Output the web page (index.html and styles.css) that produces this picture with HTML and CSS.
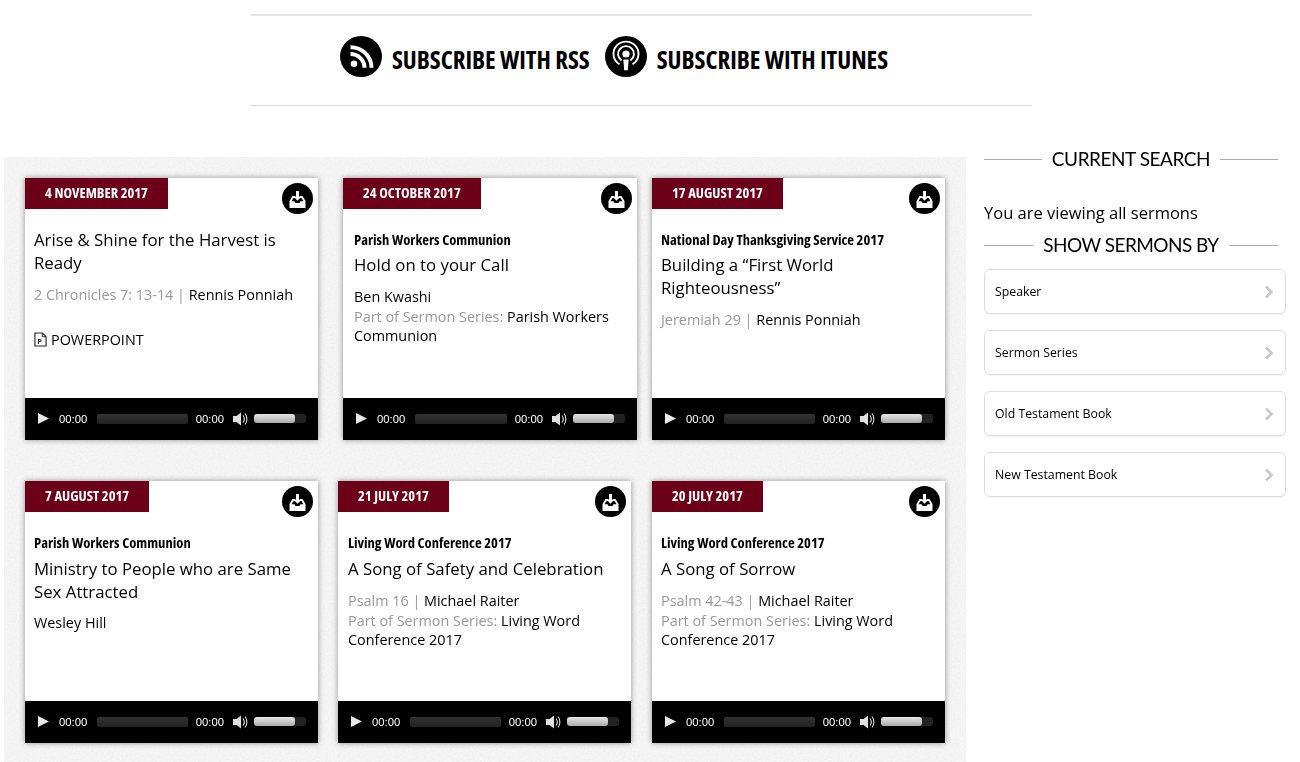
FILE: index.html
```html
<!DOCTYPE html>
<html lang="en">
<head>
<meta charset="utf-8">
<title>Sermons</title>
<link rel="stylesheet" href="styles.css">
</head>
<body>
<svg class="defs" width="0" height="0" aria-hidden="true">
  <filter id="grain" x="0" y="0" width="100%" height="100%">
    <feTurbulence type="fractalNoise" baseFrequency="0.5" numOctaves="2" seed="4"/>
    <feColorMatrix type="matrix" values="0 0 0 0 .5  0 0 0 0 .5  0 0 0 0 .5  .16 .16 0 0 -.12"/>
  </filter>
  <symbol id="dl" viewBox="0 0 31 31">
    <circle cx="15.5" cy="15.5" r="15.5" fill="#000"/>
    <path d="M7.500 25v-7l3-5h2.500v2h-1.500l-2 3.200h3l1 1.800h4l1-1.800h3l-2-3.200H18v-2h2.500l3 5v7z" fill="#fff"/>
    <path d="M14 8h3v5.500h2.400l-3.900 4.200-3.900-4.200H14z" fill="#fff"/>
  </symbol>
  <symbol id="play" viewBox="0 0 12 12"><path d="M0 0l12 6-12 6z" fill="#e8e8e8"/></symbol>
  <symbol id="vol" viewBox="0 0 15 14">
    <path d="M0 4h3.500L8 .5v13L3.500 10H0z" fill="#e0e0e0"/>
    <path d="M10 3.500c1.500 2 1.500 5 0 7M12 1.500c2.500 3 2.500 8 0 11" fill="none" stroke="#e0e0e0" stroke-width="1.100"/>
  </symbol>
  <symbol id="chev" viewBox="0 0 10 14"><path d="M2 1.500L7.500 7 2 12.500" fill="none" stroke="#c8c8c8" stroke-width="2.600"/></symbol>
</svg>

<header class="subscribe">
  <a class="sub-link">
    <svg class="sub-icon" viewBox="0 0 42 42" preserveAspectRatio="none"><circle cx="21" cy="21" r="21" fill="#000"/><circle cx="14" cy="28.500" r="3.300" fill="#fff"/><path d="M10.500 18.500a14 14 0 0 1 14 14M10.500 11.500a21 21 0 0 1 21 21" fill="none" stroke="#fff" stroke-width="4"/></svg>
    <span>SUBSCRIBE WITH RSS</span>
  </a>
  <a class="sub-link">
    <svg class="sub-icon" viewBox="0 0 42 42" preserveAspectRatio="none"><circle cx="21" cy="21" r="21" fill="#000"/><circle cx="21" cy="18.500" r="3.600" fill="#fff"/><path d="M18.300 24h5.400l-.9 11h-3.600z" fill="#fff"/><path d="M16.500 25a8 8 0 1 1 9 0M14.500 29a12.500 12.500 0 1 1 13 0" fill="none" stroke="#fff" stroke-width="1.900"/></svg>
    <span>SUBSCRIBE WITH ITUNES</span>
  </a>
</header>

<div class="layout">
  <main class="panel">
    <svg class="grain" aria-hidden="true"><rect width="100%" height="100%" filter="url(#grain)"/></svg>
    <div class="row row-a">
      <article class="card w293">
        <div class="card-top"><div class="date">4 NOVEMBER 2017</div><svg class="dl"><use href="#dl"/></svg></div>
        <div class="body">
          <h2 class="title plain">Arise &amp; Shine for the Harvest is Ready</h2>
          <p class="meta"><span class="g">2 Chronicles 7: 13-14 | </span>Rennis Ponniah</p>
          <p class="file"><svg class="ppt" viewBox="0 0 14 16"><path d="M1 1h8l4 4v10H1z" fill="none" stroke="#222" stroke-width="1.200"/><path d="M9 1v4h4" fill="none" stroke="#222"/><text x="3.600" y="13" class="ppt-t">P</text></svg>POWERPOINT</p>
        </div>
        <div class="player"><svg class="p-play"><use href="#play"/></svg><span>00:00</span><i class="track"></i><span>00:00</span><svg class="p-vol"><use href="#vol"/></svg><i class="volbar"><b></b></i></div>
      </article>
      <article class="card w294">
        <div class="card-top"><div class="date">24 OCTOBER 2017</div><svg class="dl"><use href="#dl"/></svg></div>
        <div class="body pad11">
          <h3 class="series">Parish Workers Communion</h3>
          <h2 class="title">Hold on to your Call</h2>
          <p class="meta">Ben Kwashi<br><span class="g">Part of Sermon Series: </span>Parish Workers Communion</p>
        </div>
        <div class="player"><svg class="p-play"><use href="#play"/></svg><span>00:00</span><i class="track"></i><span>00:00</span><svg class="p-vol"><use href="#vol"/></svg><i class="volbar"><b></b></i></div>
      </article>
      <article class="card w293">
        <div class="card-top"><div class="date">17 AUGUST 2017</div><svg class="dl"><use href="#dl"/></svg></div>
        <div class="body">
          <h3 class="series">National Day Thanksgiving Service 2017</h3>
          <h2 class="title">Building a “First World Righteousness”</h2>
          <p class="meta"><span class="g">Jeremiah 29 | </span>Rennis Ponniah</p>
        </div>
        <div class="player"><svg class="p-play"><use href="#play"/></svg><span>00:00</span><i class="track"></i><span>00:00</span><svg class="p-vol"><use href="#vol"/></svg><i class="volbar"><b></b></i></div>
      </article>
    </div>
    <div class="row row-b">
      <article class="card w293">
        <div class="card-top"><div class="date">7 AUGUST 2017</div><svg class="dl"><use href="#dl"/></svg></div>
        <div class="body">
          <h3 class="series">Parish Workers Communion</h3>
          <h2 class="title tight">Ministry to People who are Same Sex Attracted</h2>
          <p class="meta">Wesley Hill</p>
        </div>
        <div class="player"><svg class="p-play"><use href="#play"/></svg><span>00:00</span><i class="track"></i><span>00:00</span><svg class="p-vol"><use href="#vol"/></svg><i class="volbar"><b></b></i></div>
      </article>
      <article class="card w293">
        <div class="card-top"><div class="date">21 JULY 2017</div><svg class="dl"><use href="#dl"/></svg></div>
        <div class="body pad10">
          <h3 class="series">Living Word Conference 2017</h3>
          <h2 class="title">A Song of Safety and Celebration</h2>
          <p class="meta"><span class="g">Psalm 16 | </span>Michael Raiter<br><span class="g">Part of Sermon Series: </span>Living Word Conference 2017</p>
        </div>
        <div class="player"><svg class="p-play"><use href="#play"/></svg><span>00:00</span><i class="track"></i><span>00:00</span><svg class="p-vol"><use href="#vol"/></svg><i class="volbar"><b></b></i></div>
      </article>
      <article class="card w293">
        <div class="card-top"><div class="date">20 JULY 2017</div><svg class="dl"><use href="#dl"/></svg></div>
        <div class="body">
          <h3 class="series">Living Word Conference 2017</h3>
          <h2 class="title">A Song of Sorrow</h2>
          <p class="meta"><span class="g">Psalm 42-43 | </span>Michael Raiter<br><span class="g">Part of Sermon Series: </span>Living Word Conference 2017</p>
        </div>
        <div class="player"><svg class="p-play"><use href="#play"/></svg><span>00:00</span><i class="track"></i><span>00:00</span><svg class="p-vol"><use href="#vol"/></svg><i class="volbar"><b></b></i></div>
      </article>
    </div>
  </main>

  <aside class="side">
    <h2 class="side-h h-a">CURRENT SEARCH</h2>
    <p class="viewing">You are viewing all sermons</p>
    <h2 class="side-h h-b">SHOW SERMONS BY</h2>
    <ul class="filters">
      <li>Speaker<svg class="chev"><use href="#chev"/></svg></li>
      <li>Sermon Series<svg class="chev"><use href="#chev"/></svg></li>
      <li>Old Testament Book<svg class="chev"><use href="#chev"/></svg></li>
      <li>New Testament Book<svg class="chev"><use href="#chev"/></svg></li>
    </ul>
  </aside>
</div>
</body>
</html>
```

FILE: styles.css
```css
* { box-sizing: border-box; }
html, body { margin: 0; padding: 0; }
body {
  width: 1300px;
  height: 762px;
  overflow: hidden;
  background: #fff;
  color: #000;
  font-family: "Open Sans", "Noto Sans", sans-serif;
}
.defs { display: block; height: 0; }
h2, h3, p, ul { margin: 0; padding: 0; }

.subscribe {
  width: 781px;
  height: 92px;
  margin: 14px 0 0 251px;
  border-top: 2px solid #e4e4e4;
  border-bottom: 1px solid #d8d8d8;
  display: flex;
  align-items: flex-start;
  padding: 20px 0 0 89px;
  gap: 15px;
}
.sub-link { display: flex; align-items: center; gap: 10px; }
.sub-icon { width: 42px; height: 41px; display: block; }
.sub-link span {
  font-size: 24.8px;
  font-weight: 700;
  font-stretch: 75%;
  line-height: 41px;
  position: relative;
  top: 3px;
  white-space: nowrap;
}

.layout { display: flex; margin-top: 51px; padding-left: 4px; will-change: opacity; }
.panel {
  width: 962px;
  height: 605px;
  padding: 21px 0 0 21px;
  background-color: #f6f6f6;
  position: relative;
}
.grain { position: absolute; left: 0; top: 0; width: 100%; height: 100%; }
.row { display: flex; height: 262px; position: relative; }
.row-a { gap: 25px; }
.row-a .card + .card + .card { margin-left: -10px; }
.row-b { margin-top: 41px; gap: 20px; }
.row-b .card + .card + .card { margin-left: 1px; }
.row-b .series { margin-bottom: 6px; }
.card {
  height: 262px;
  background: #fff;
  box-shadow: 0 0 6px rgba(0, 0, 0, .4);
  display: flex;
  flex-direction: column;
  position: relative;
}
.w293 { width: 293px; }
.w294 { width: 294px; }
.card-top { height: 31px; display: flex; }
.date {
  background: #6d0019;
  color: #fff;
  font-size: 14.5px;
  font-weight: 700;
  font-stretch: 75%;
  line-height: 29px;
  padding: 0 20px;
  white-space: nowrap;
}
.dl { position: absolute; right: 5px; top: 5px; width: 31px; height: 31px; }
.body { flex: 1; padding: 21px 9px 0; }
.pad11 { padding-left: 11px; }
.pad10 { padding-left: 10px; }
.series {
  font-size: 14.6px;
  line-height: 18px;
  font-weight: 700;
  font-stretch: 75%;
  margin-bottom: 5px;
  white-space: nowrap;
}
.title { font-size: 16.8px; font-weight: 400; line-height: 23px; margin-bottom: 11px; }
.title.tight { margin-bottom: 10px; }
.plain { margin-top: -2px; }
.meta { font-size: 14.4px; line-height: 19.7px; }
.g { color: #999; }
.file { font-size: 14.4px; line-height: 20px; margin-top: 25px; display: flex; align-items: center; gap: 4px; }
.ppt { width: 13px; height: 15px; display: block; }
.ppt-t { font-size: 8px; font-weight: 700; fill: #222; }
.player {
  height: 42px;
  background: #000;
  color: #fff;
  display: flex;
  align-items: center;
  padding: 0 12px 1px 13px;
  font-family: "Liberation Sans", Arial, sans-serif;
  font-size: 11.3px;
}
.p-play { width: 11px; height: 11px; margin-right: 10px; }
.track { display: block; flex: 1; height: 10px; margin: 0 8px 0 10px; background: linear-gradient(#333, #222); border-radius: 2px; }
.p-vol { width: 15px; height: 14px; margin: 0 6px 0 9px; }
.volbar { display: block; width: 52px; height: 9px; background: #222; border-radius: 3px; }
.volbar b { display: block; width: 41px; height: 9px; border-radius: 3px; background: linear-gradient(#e8e8e8, #aaa); }

.side { width: 302px; margin-left: 18px; }
.side-h {
  display: flex;
  align-items: center;
  width: 294px;
  font-family: "Lato", "Liberation Sans", sans-serif;
  font-size: 19px;
  font-weight: 400;
  letter-spacing: -.45px;
  line-height: 24px;
  white-space: nowrap;
}
.side-h::before, .side-h::after { content: ""; flex: 1; height: 1px; background: #aaa; }
.h-a { gap: 10px; margin-top: -10px; }
.h-b { gap: 10px; letter-spacing: -.55px; }
.viewing { font-size: 16.5px; line-height: 22px; margin: 31px 0 9px; }
.filters { list-style: none; margin-top: 12px; display: flex; flex-direction: column; gap: 16px; width: 302px; }
.filters li {
  height: 45px;
  border: 1px solid #ddd;
  border-radius: 6px;
  display: flex;
  align-items: center;
  justify-content: space-between;
  padding: 0 11px 0 10px;
  font-size: 12.3px;
  box-shadow: 0 1px 1px rgba(0,0,0,.05);
}
.chev { width: 10px; height: 14px; }
```
